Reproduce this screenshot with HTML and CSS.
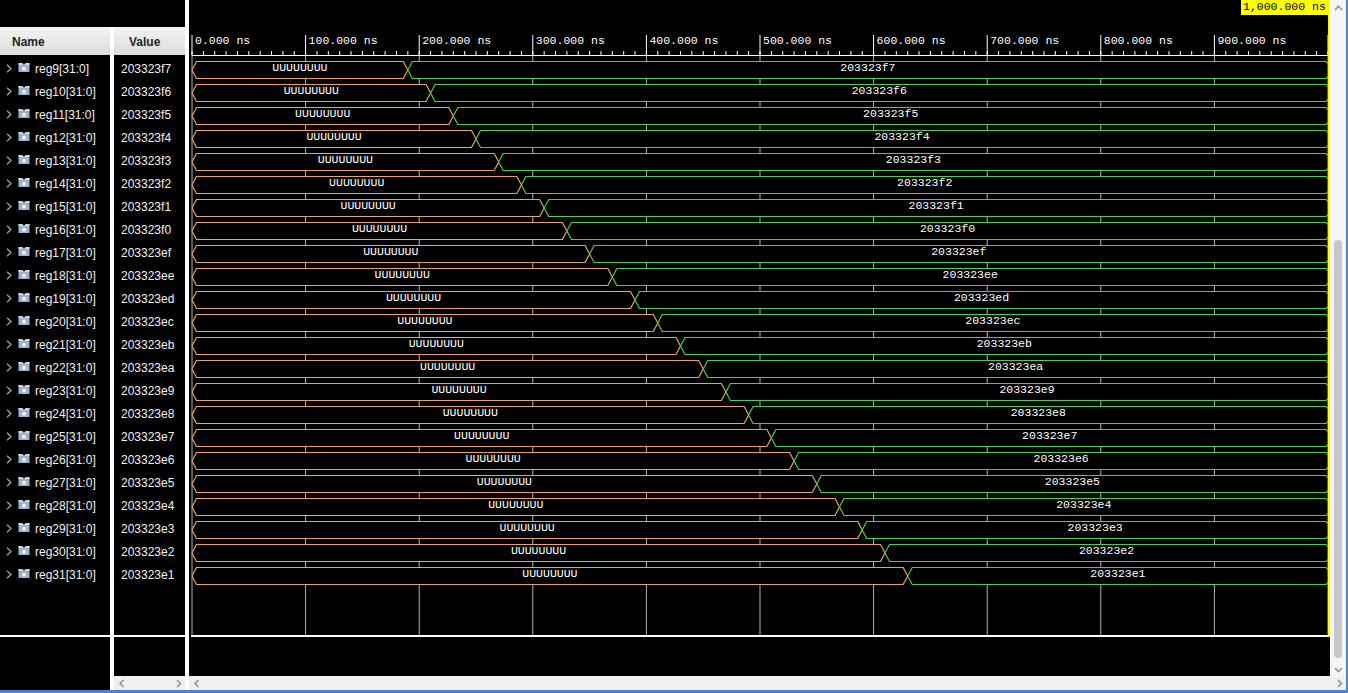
FILE: index.html
```html
<!DOCTYPE html>
<html>
<head>
<meta charset="utf-8">
<link rel="stylesheet" href="styles.css">
</head>
<body>
<svg class="defs" width="0" height="0">
  <symbol id="chev" viewBox="0 0 6 9"><polyline points="1,0.8 5,4.5 1,8.2" fill="none" stroke="#a8a8a8" stroke-width="1.2"/></symbol>
  <symbol id="bus" viewBox="0 0 12 11"><path d="M0.5 1h3.6l1.9 2 1.9-2h3.6v9h-11z" fill="#9bb2d0"/><path d="M0.5 1h3.6l1.9 2 1.9-2h3.6v2h-11z" fill="#c9d6e6"/><circle cx="6" cy="6.8" r="2" fill="#f0f4f8"/></symbol>
  <symbol id="al" viewBox="0 0 6 9"><polyline points="4.5,1 1,4.5 4.5,8" fill="none" stroke="#8a8a8a" stroke-width="1.4"/></symbol>
  <symbol id="ar" viewBox="0 0 6 9"><polyline points="1,1 4.5,4.5 1,8" fill="none" stroke="#8a8a8a" stroke-width="1.4"/></symbol>
  <symbol id="au" viewBox="0 0 9 6"><polyline points="1,5 4.5,1.3 8,5" fill="none" stroke="#8a8a8a" stroke-width="1.4"/></symbol>
  <symbol id="ad" viewBox="0 0 9 6"><polyline points="1,1 4.5,4.7 8,1" fill="none" stroke="#8a8a8a" stroke-width="1.4"/></symbol>
</svg>
<div class="app">
  <div class="left">
    <div class="topbar"></div>
    <div class="cols">
      <div class="col name-col">
        <div class="hdr">Name</div>
        <div class="rows">
          <div class="row"><svg class="chev"><use href="#chev"/></svg><svg class="bus"><use href="#bus"/></svg><span>reg9[31:0]</span></div>
          <div class="row"><svg class="chev"><use href="#chev"/></svg><svg class="bus"><use href="#bus"/></svg><span>reg10[31:0]</span></div>
          <div class="row"><svg class="chev"><use href="#chev"/></svg><svg class="bus"><use href="#bus"/></svg><span>reg11[31:0]</span></div>
          <div class="row"><svg class="chev"><use href="#chev"/></svg><svg class="bus"><use href="#bus"/></svg><span>reg12[31:0]</span></div>
          <div class="row"><svg class="chev"><use href="#chev"/></svg><svg class="bus"><use href="#bus"/></svg><span>reg13[31:0]</span></div>
          <div class="row"><svg class="chev"><use href="#chev"/></svg><svg class="bus"><use href="#bus"/></svg><span>reg14[31:0]</span></div>
          <div class="row"><svg class="chev"><use href="#chev"/></svg><svg class="bus"><use href="#bus"/></svg><span>reg15[31:0]</span></div>
          <div class="row"><svg class="chev"><use href="#chev"/></svg><svg class="bus"><use href="#bus"/></svg><span>reg16[31:0]</span></div>
          <div class="row"><svg class="chev"><use href="#chev"/></svg><svg class="bus"><use href="#bus"/></svg><span>reg17[31:0]</span></div>
          <div class="row"><svg class="chev"><use href="#chev"/></svg><svg class="bus"><use href="#bus"/></svg><span>reg18[31:0]</span></div>
          <div class="row"><svg class="chev"><use href="#chev"/></svg><svg class="bus"><use href="#bus"/></svg><span>reg19[31:0]</span></div>
          <div class="row"><svg class="chev"><use href="#chev"/></svg><svg class="bus"><use href="#bus"/></svg><span>reg20[31:0]</span></div>
          <div class="row"><svg class="chev"><use href="#chev"/></svg><svg class="bus"><use href="#bus"/></svg><span>reg21[31:0]</span></div>
          <div class="row"><svg class="chev"><use href="#chev"/></svg><svg class="bus"><use href="#bus"/></svg><span>reg22[31:0]</span></div>
          <div class="row"><svg class="chev"><use href="#chev"/></svg><svg class="bus"><use href="#bus"/></svg><span>reg23[31:0]</span></div>
          <div class="row"><svg class="chev"><use href="#chev"/></svg><svg class="bus"><use href="#bus"/></svg><span>reg24[31:0]</span></div>
          <div class="row"><svg class="chev"><use href="#chev"/></svg><svg class="bus"><use href="#bus"/></svg><span>reg25[31:0]</span></div>
          <div class="row"><svg class="chev"><use href="#chev"/></svg><svg class="bus"><use href="#bus"/></svg><span>reg26[31:0]</span></div>
          <div class="row"><svg class="chev"><use href="#chev"/></svg><svg class="bus"><use href="#bus"/></svg><span>reg27[31:0]</span></div>
          <div class="row"><svg class="chev"><use href="#chev"/></svg><svg class="bus"><use href="#bus"/></svg><span>reg28[31:0]</span></div>
          <div class="row"><svg class="chev"><use href="#chev"/></svg><svg class="bus"><use href="#bus"/></svg><span>reg29[31:0]</span></div>
          <div class="row"><svg class="chev"><use href="#chev"/></svg><svg class="bus"><use href="#bus"/></svg><span>reg30[31:0]</span></div>
          <div class="row"><svg class="chev"><use href="#chev"/></svg><svg class="bus"><use href="#bus"/></svg><span>reg31[31:0]</span></div>
        </div>
        <div class="rule"></div>
        <div class="foot"></div>
      </div>
      <div class="col value-col">
        <div class="hdr">Value</div>
        <div class="rows">
          <div class="row">203323f7</div>
          <div class="row">203323f6</div>
          <div class="row">203323f5</div>
          <div class="row">203323f4</div>
          <div class="row">203323f3</div>
          <div class="row">203323f2</div>
          <div class="row">203323f1</div>
          <div class="row">203323f0</div>
          <div class="row">203323ef</div>
          <div class="row">203323ee</div>
          <div class="row">203323ed</div>
          <div class="row">203323ec</div>
          <div class="row">203323eb</div>
          <div class="row">203323ea</div>
          <div class="row">203323e9</div>
          <div class="row">203323e8</div>
          <div class="row">203323e7</div>
          <div class="row">203323e6</div>
          <div class="row">203323e5</div>
          <div class="row">203323e4</div>
          <div class="row">203323e3</div>
          <div class="row">203323e2</div>
          <div class="row">203323e1</div>
        </div>
        <div class="rule"></div>
        <div class="foot"></div>
        <div class="hscroll small">
          <svg class="arr"><use href="#al"/></svg>
          <svg class="arr"><use href="#ar"/></svg>
        </div>
      </div>
    </div>
  </div>
  <div class="right">
    <div class="wave-area">
      <svg class="wave" width="1141" height="676" viewBox="189 0 1141 676">
        <line class="grid" x1="191.5" y1="345.5" x2="1329" y2="345.5"/>
        <line class="major" x1="191.5" y1="45" x2="1329" y2="45"/>
        <line class="minor" x1="191.5" y1="53" x2="1329" y2="53"/>
        <line class="axis" x1="191.5" y1="55.5" x2="1329" y2="55.5"/>
        <g class="tlbl">
          <text x="195" y="43.5">0.000 ns</text>
          <text x="308.6" y="43.5">100.000 ns</text>
          <text x="422.2" y="43.5">200.000 ns</text>
          <text x="535.8" y="43.5">300.000 ns</text>
          <text x="649.4" y="43.5">400.000 ns</text>
          <text x="763" y="43.5">500.000 ns</text>
          <text x="876.6" y="43.5">600.000 ns</text>
          <text x="990.2" y="43.5">700.000 ns</text>
          <text x="1103.8" y="43.5">800.000 ns</text>
          <text x="1217.4" y="43.5">900.000 ns</text>
        </g>
        <g class="sig">
          <g transform="translate(0 0)"><path class="u" d="M192 70L196.5 61.5H403.3L407.8 70L403.3 78.5H196.5Z"/><path class="v" d="M407.8 70L412.3 61.5H1326L1328 63.5V76.5L1326 78.5H412.3Z"/><text x="299.9" y="71">UUUUUUUU</text><text x="867.9" y="71">203323f7</text></g>
          <g transform="translate(0 23)"><path class="u" d="M192 70L196.5 61.5H426.1L430.6 70L426.1 78.5H196.5Z"/><path class="v" d="M430.6 70L435.1 61.5H1326L1328 63.5V76.5L1326 78.5H435.1Z"/><text x="311.3" y="71">UUUUUUUU</text><text x="879.3" y="71">203323f6</text></g>
          <g transform="translate(0 46)"><path class="u" d="M192 70L196.5 61.5H448.8L453.3 70L448.8 78.5H196.5Z"/><path class="v" d="M453.3 70L457.8 61.5H1326L1328 63.5V76.5L1326 78.5H457.8Z"/><text x="322.7" y="71">UUUUUUUU</text><text x="890.7" y="71">203323f5</text></g>
          <g transform="translate(0 69)"><path class="u" d="M192 70L196.5 61.5H471.5L476 70L471.5 78.5H196.5Z"/><path class="v" d="M476 70L480.5 61.5H1326L1328 63.5V76.5L1326 78.5H480.5Z"/><text x="334" y="71">UUUUUUUU</text><text x="902" y="71">203323f4</text></g>
          <g transform="translate(0 92)"><path class="u" d="M192 70L196.5 61.5H494.2L498.7 70L494.2 78.5H196.5Z"/><path class="v" d="M498.7 70L503.2 61.5H1326L1328 63.5V76.5L1326 78.5H503.2Z"/><text x="345.4" y="71">UUUUUUUU</text><text x="913.4" y="71">203323f3</text></g>
          <g transform="translate(0 115)"><path class="u" d="M192 70L196.5 61.5H516.9L521.4 70L516.9 78.5H196.5Z"/><path class="v" d="M521.4 70L525.9 61.5H1326L1328 63.5V76.5L1326 78.5H525.9Z"/><text x="356.7" y="71">UUUUUUUU</text><text x="924.7" y="71">203323f2</text></g>
          <g transform="translate(0 138)"><path class="u" d="M192 70L196.5 61.5H539.7L544.2 70L539.7 78.5H196.5Z"/><path class="v" d="M544.2 70L548.7 61.5H1326L1328 63.5V76.5L1326 78.5H548.7Z"/><text x="368.1" y="71">UUUUUUUU</text><text x="936.1" y="71">203323f1</text></g>
          <g transform="translate(0 161)"><path class="u" d="M192 70L196.5 61.5H562.4L566.9 70L562.4 78.5H196.5Z"/><path class="v" d="M566.9 70L571.4 61.5H1326L1328 63.5V76.5L1326 78.5H571.4Z"/><text x="379.5" y="71">UUUUUUUU</text><text x="947.5" y="71">203323f0</text></g>
          <g transform="translate(0 184)"><path class="u" d="M192 70L196.5 61.5H585.1L589.6 70L585.1 78.5H196.5Z"/><path class="v" d="M589.6 70L594.1 61.5H1326L1328 63.5V76.5L1326 78.5H594.1Z"/><text x="390.8" y="71">UUUUUUUU</text><text x="958.8" y="71">203323ef</text></g>
          <g transform="translate(0 207)"><path class="u" d="M192 70L196.5 61.5H607.8L612.3 70L607.8 78.5H196.5Z"/><path class="v" d="M612.3 70L616.8 61.5H1326L1328 63.5V76.5L1326 78.5H616.8Z"/><text x="402.2" y="71">UUUUUUUU</text><text x="970.2" y="71">203323ee</text></g>
          <g transform="translate(0 230)"><path class="u" d="M192 70L196.5 61.5H630.5L635 70L630.5 78.5H196.5Z"/><path class="v" d="M635 70L639.5 61.5H1326L1328 63.5V76.5L1326 78.5H639.5Z"/><text x="413.5" y="71">UUUUUUUU</text><text x="981.5" y="71">203323ed</text></g>
          <g transform="translate(0 253)"><path class="u" d="M192 70L196.5 61.5H653.3L657.8 70L653.3 78.5H196.5Z"/><path class="v" d="M657.8 70L662.3 61.5H1326L1328 63.5V76.5L1326 78.5H662.3Z"/><text x="424.9" y="71">UUUUUUUU</text><text x="992.9" y="71">203323ec</text></g>
          <g transform="translate(0 276)"><path class="u" d="M192 70L196.5 61.5H676L680.5 70L676 78.5H196.5Z"/><path class="v" d="M680.5 70L685 61.5H1326L1328 63.5V76.5L1326 78.5H685Z"/><text x="436.3" y="71">UUUUUUUU</text><text x="1004.3" y="71">203323eb</text></g>
          <g transform="translate(0 299)"><path class="u" d="M192 70L196.5 61.5H698.7L703.2 70L698.7 78.5H196.5Z"/><path class="v" d="M703.2 70L707.7 61.5H1326L1328 63.5V76.5L1326 78.5H707.7Z"/><text x="447.6" y="71">UUUUUUUU</text><text x="1015.6" y="71">203323ea</text></g>
          <g transform="translate(0 322)"><path class="u" d="M192 70L196.5 61.5H721.4L725.9 70L721.4 78.5H196.5Z"/><path class="v" d="M725.9 70L730.4 61.5H1326L1328 63.5V76.5L1326 78.5H730.4Z"/><text x="459" y="71">UUUUUUUU</text><text x="1027" y="71">203323e9</text></g>
          <g transform="translate(0 345)"><path class="u" d="M192 70L196.5 61.5H744.1L748.6 70L744.1 78.5H196.5Z"/><path class="v" d="M748.6 70L753.1 61.5H1326L1328 63.5V76.5L1326 78.5H753.1Z"/><text x="470.3" y="71">UUUUUUUU</text><text x="1038.3" y="71">203323e8</text></g>
          <g transform="translate(0 368)"><path class="u" d="M192 70L196.5 61.5H766.9L771.4 70L766.9 78.5H196.5Z"/><path class="v" d="M771.4 70L775.9 61.5H1326L1328 63.5V76.5L1326 78.5H775.9Z"/><text x="481.7" y="71">UUUUUUUU</text><text x="1049.7" y="71">203323e7</text></g>
          <g transform="translate(0 391)"><path class="u" d="M192 70L196.5 61.5H789.6L794.1 70L789.6 78.5H196.5Z"/><path class="v" d="M794.1 70L798.6 61.5H1326L1328 63.5V76.5L1326 78.5H798.6Z"/><text x="493.1" y="71">UUUUUUUU</text><text x="1061.1" y="71">203323e6</text></g>
          <g transform="translate(0 414)"><path class="u" d="M192 70L196.5 61.5H812.3L816.8 70L812.3 78.5H196.5Z"/><path class="v" d="M816.8 70L821.3 61.5H1326L1328 63.5V76.5L1326 78.5H821.3Z"/><text x="504.4" y="71">UUUUUUUU</text><text x="1072.4" y="71">203323e5</text></g>
          <g transform="translate(0 437)"><path class="u" d="M192 70L196.5 61.5H835L839.5 70L835 78.5H196.5Z"/><path class="v" d="M839.5 70L844 61.5H1326L1328 63.5V76.5L1326 78.5H844Z"/><text x="515.8" y="71">UUUUUUUU</text><text x="1083.8" y="71">203323e4</text></g>
          <g transform="translate(0 460)"><path class="u" d="M192 70L196.5 61.5H857.7L862.2 70L857.7 78.5H196.5Z"/><path class="v" d="M862.2 70L866.7 61.5H1326L1328 63.5V76.5L1326 78.5H866.7Z"/><text x="527.1" y="71">UUUUUUUU</text><text x="1095.1" y="71">203323e3</text></g>
          <g transform="translate(0 483)"><path class="u" d="M192 70L196.5 61.5H880.5L885 70L880.5 78.5H196.5Z"/><path class="v" d="M885 70L889.5 61.5H1326L1328 63.5V76.5L1326 78.5H889.5Z"/><text x="538.5" y="71">UUUUUUUU</text><text x="1106.5" y="71">203323e2</text></g>
          <g transform="translate(0 506)"><path class="u" d="M192 70L196.5 61.5H903.2L907.7 70L903.2 78.5H196.5Z"/><path class="v" d="M907.7 70L912.2 61.5H1326L1328 63.5V76.5L1326 78.5H912.2Z"/><text x="549.9" y="71">UUUUUUUU</text><text x="1117.9" y="71">203323e1</text></g>
        </g>
        <line class="bottom" x1="191" y1="636" x2="1330" y2="636"/>
        <line class="cursor" x1="1329" y1="0" x2="1329" y2="637"/>
        <rect class="cur-box" x="1241" y="0" width="88" height="15"/>
        <text class="cur-txt" x="1243" y="10">1,000.000 ns</text>
      </svg>
      <div class="vscroll">
        <svg class="varr up"><use href="#au"/></svg>
        <div class="thumb"></div>
        <svg class="varr down"><use href="#ad"/></svg>
      </div>
    </div>
    <div class="hscroll wide">
      <svg class="arr"><use href="#al"/></svg>
      <svg class="arr"><use href="#ar"/></svg>
    </div>
  </div>
</div>
</body>
</html>
```

FILE: styles.css
```css
html, body {
  margin: 0;
  padding: 0;
  background: #ffffff;
  overflow: hidden;
}

.defs {
  position: absolute;
  width: 0;
  height: 0;
}

.app {
  display: flex;
  gap: 4px;
  width: 1346px;
  height: 690px;
  background: #ffffff;
  border-right: 2px solid #4f81c7;
  border-bottom: 3px solid #4f81c7;
  font-family: "Liberation Sans", Arial, sans-serif;
}

.left {
  width: 185px;
  display: flex;
  flex-direction: column;
}

.topbar {
  height: 27px;
  background: #000000;
}

.cols {
  flex: 1;
  display: flex;
  gap: 4px;
  background: #ffffff;
}

.col {
  display: flex;
  flex-direction: column;
}

.name-col {
  width: 110px;
  background: #000000;
}

.value-col {
  width: 71px;
  background: #000000;
}

.hdr {
  height: 28px;
  display: flex;
  align-items: center;
  padding-top: 1px;
  box-sizing: border-box;
  background: linear-gradient(#f3f3f3, #dcdcdc);
  font-weight: bold;
  font-size: 12px;
  color: #1e1e1e;
}

.name-col .hdr {
  padding-left: 12px;
}

.value-col .hdr {
  padding-left: 15px;
}

.rows {
  height: 580px;
  padding-top: 2px;
  box-sizing: border-box;
  display: flex;
  flex-direction: column;
}

.row {
  height: 23px;
  display: flex;
  align-items: center;
  font-size: 12px;
  color: #f2f2f2;
  white-space: nowrap;
}

.name-col .row {
  padding-left: 6px;
}

.value-col .row {
  padding-left: 7px;
}

.chev {
  width: 6px;
  height: 9px;
  margin-right: 6px;
}

.bus {
  width: 12px;
  height: 11px;
  margin-right: 5px;
  margin-top: -2px;
}

.rule {
  height: 2px;
  background: #ffffff;
}

.foot {
  flex: 1;
  background: #000000;
}

.hscroll {
  height: 14px;
  display: flex;
  align-items: center;
  justify-content: space-between;
  background: #f0f0f0;
}

.hscroll.small {
  padding: 0 3px 0 5px;
}

.hscroll.wide {
  padding: 0 3px 0 5px;
}

.arr {
  width: 6px;
  height: 9px;
}

.right {
  width: 1157px;
  display: flex;
  flex-direction: column;
}

.wave-area {
  height: 676px;
  display: flex;
}

.wave {
  display: block;
  width: 1141px;
  height: 676px;
  background: #000000;
}

.grid {
  stroke: #b4b4b4;
  stroke-width: 579;
  stroke-dasharray: 1 112.6;
}

.major {
  stroke: #ffffff;
  stroke-width: 20;
  stroke-dasharray: 1 112.6;
}

.minor {
  stroke: #ffffff;
  stroke-width: 4;
  stroke-dasharray: 1 10.36;
}

.axis {
  stroke: #ffffff;
  stroke-width: 1;
}

.tlbl text {
  font-family: "Liberation Mono", "Courier New", monospace;
  font-size: 11.5px;
  fill: #ffffff;
}

.sig text {
  font-family: "Liberation Mono", "Courier New", monospace;
  font-size: 11.5px;
  fill: #ffffff;
  text-anchor: middle;
}

.u {
  fill: #000000;
  stroke: #eaa556;
  stroke-width: 1.2;
}

.v {
  fill: #000000;
  stroke: #44d444;
  stroke-width: 1.2;
}

.bottom {
  stroke: #ffffff;
  stroke-width: 2;
}

.cursor {
  stroke: #ffff00;
  stroke-width: 2;
}

.cur-box {
  fill: #ffff00;
}

.cur-txt {
  font-family: "Liberation Mono", "Courier New", monospace;
  font-size: 11.5px;
  fill: #000000;
}

.vscroll {
  width: 16px;
  height: 676px;
  background: #f5f5f5;
  display: flex;
  flex-direction: column;
  align-items: center;
  padding-top: 5px;
  box-sizing: border-box;
}

.varr {
  width: 9px;
  height: 6px;
}

.thumb {
  width: 8px;
  height: 418px;
  margin-top: 229px;
  border-radius: 4px;
  background: #c6c6c6;
}

.varr.down {
  margin-top: 9px;
}
```
